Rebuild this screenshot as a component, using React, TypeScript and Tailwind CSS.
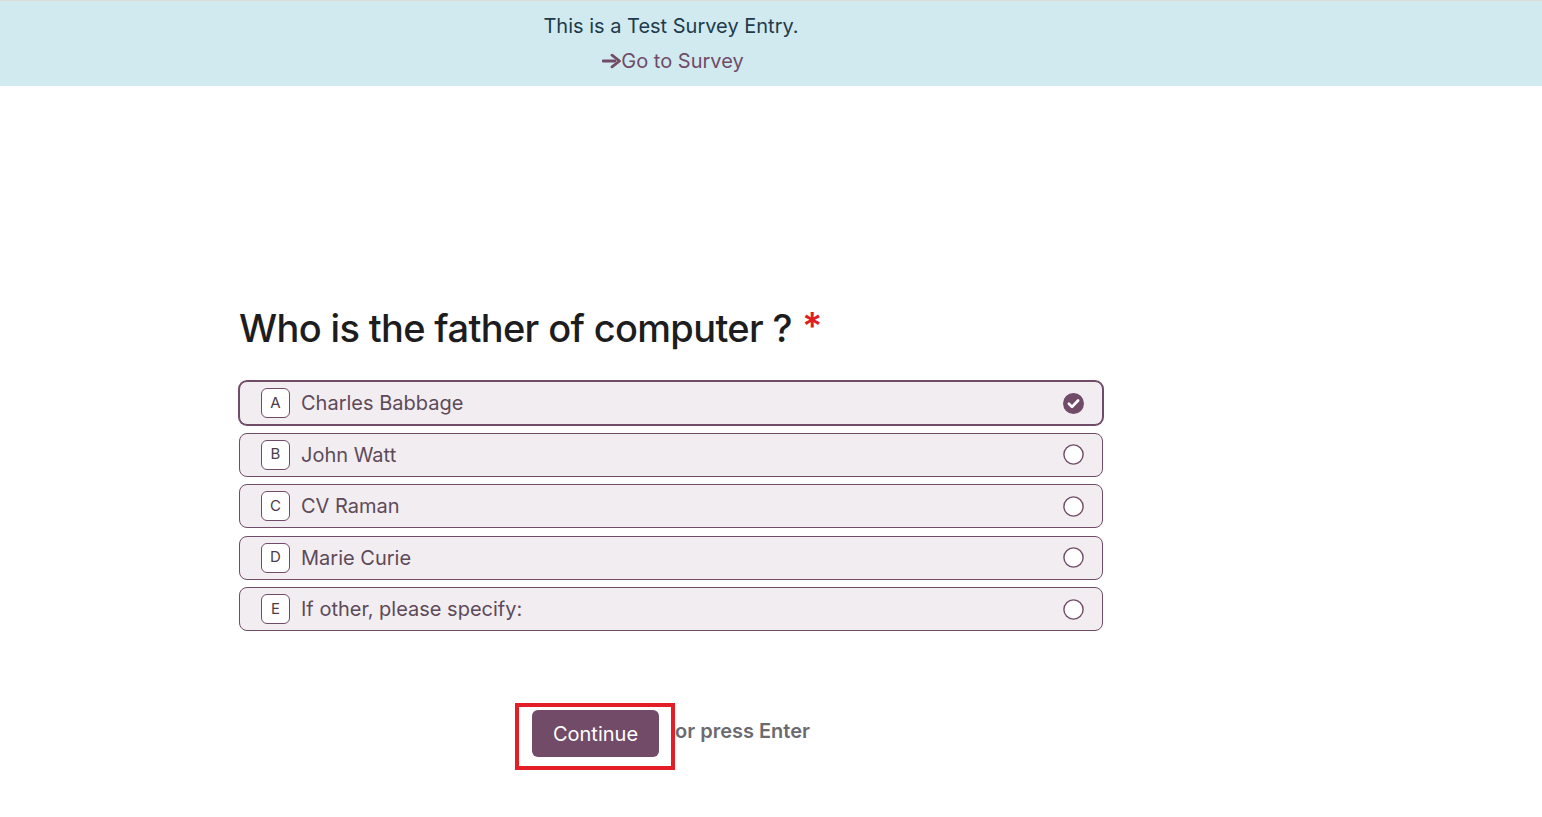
const options = [
  { key: "A", label: "Charles Babbage", checked: true },
  { key: "B", label: "John Watt", checked: false },
  { key: "C", label: "CV Raman", checked: false },
  { key: "D", label: "Marie Curie", checked: false },
  { key: "E", label: "If other, please specify:", checked: false },
];

function CheckedRadio() {
  return (
    <svg width="21" height="21" viewBox="0 0 20 20">
      <circle cx="10" cy="10" r="10" fill="#714B67" />
      <path d="M5.6 10.2l3 3 5.8-6" fill="none" stroke="#fff" strokeWidth="2.6" strokeLinecap="round" strokeLinejoin="round" />
    </svg>
  );
}

function EmptyRadio() {
  return (
    <svg width="21" height="21" viewBox="0 0 21 21">
      <circle cx="10.5" cy="10.5" r="9.6" fill="#fff" stroke="#714B67" strokeWidth="1.4" />
    </svg>
  );
}

export default function App() {
  return (
    <div className="min-h-screen bg-white font-['Inter',sans-serif]">
      <div className="h-[86px] border-t border-[#dcdcdc] bg-[#d0eaf0]">
        <div className="flex w-[1342px] flex-col items-center">
          <p className="mt-[9px] text-[20px] leading-[32px] text-[#1f3a4b]">This is a Test Survey Entry.</p>
          <a href="#" className="ml-[4px] mt-[3px] flex items-center text-[20px] leading-[32px] text-[#714B67]">
            <svg width="19" height="16" viewBox="0 0 19 16">
              <path d="M1 8h12" fill="none" stroke="#714B67" strokeWidth="2.8" strokeLinecap="round" />
              <path d="M10 2.2L17.5 8 10 13.8" fill="none" stroke="#714B67" strokeWidth="2.8" strokeLinecap="round" strokeLinejoin="round" />
            </svg>
            Go to Survey
          </a>
        </div>
      </div>

      <main className="ml-[239px] w-[864px] pt-[218px]">
        <h1 className="flex items-start text-[38px] font-medium leading-[48px] tracking-[-0.65px] text-[#1d1d20]">
          Who is the father of computer ?
          <span className="ml-[10px] text-[38px] font-semibold leading-[44px] text-[#e11d24]">*</span>
        </h1>

        <div className="mt-[29px] flex flex-col gap-[7.5px]">
          {options.map((o) => (
            <label
              key={o.key}
              className={
                "flex h-[44px] items-center rounded-[8px] border bg-[#f2edf1] pl-[21px] pr-[18px] " +
                (o.checked ? "border-[#714B67] shadow-[0_0_0_1px_#714B67]" : "border-[#714B67]")
              }
            >
              <span className="flex h-[30px] w-[29px] items-center justify-center rounded-[6px] border border-[#714B67] bg-white text-[15px] text-[#4a3d48]">
                {o.key}
              </span>
              <span className="ml-[11px] flex-1 text-[20px] text-[#5d4a59]">{o.label}</span>
              {o.checked ? <CheckedRadio /> : <EmptyRadio />}
            </label>
          ))}
        </div>

        <div className="mt-[72px] flex items-center">
          <div className="ml-[276px] border-4 border-[#e41e26] pb-[9px] pl-[13px] pr-[12px] pt-[3px]">
            <button className="h-[47px] w-[127px] rounded-[6px] bg-[#714B67] text-[20px] text-white">Continue</button>
          </div>
          <span className="-mt-[11px] text-[20px] font-semibold text-[#6b6b6f]">or press Enter</span>
        </div>
      </main>
    </div>
  );
}
